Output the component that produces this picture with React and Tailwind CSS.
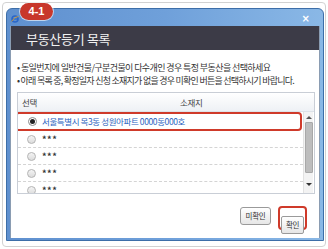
export default function App() {
  const rows = ['***', '***', '***', '***'];

  return (
    <div className="w-[328px] h-[249px] bg-white p-[2px] font-['Noto_Sans_CJK_KR','Noto_Sans',sans-serif]">
      <div className="relative h-[245px] rounded-[4px] border border-[#d2d2d2] pt-[5px] pl-[3px] pr-[1px]">
        {/* step badge */}
        <span className="absolute left-[17px] top-[0px] w-[33px] h-[17px] rounded-full bg-[#c8372b] text-white text-[11px] font-bold leading-[17px] text-center shadow-[0_0_0_1px_rgba(255,255,255,0.6)] font-['Liberation_Sans',sans-serif]">
          4-1
        </span>

        {/* window */}
        <div className="w-[318px] h-[233px] flex flex-col rounded-t-[6px] border border-[#3d6ea8] bg-gradient-to-r from-[#5f90cf] via-[#6fa0da] to-[#8ab8e6] px-[3px] pb-[2px]">
          <div className="h-[17px] flex items-center justify-between">
            <svg width="8" height="8" viewBox="0 0 8 8" className="ml-[1px] mt-[3px]">
              <circle cx="4" cy="4" r="3" fill="none" stroke="#2a66c8" strokeWidth="1.6" />
              <path d="M1.5 4h5" stroke="#2a66c8" strokeWidth="1.2" />
              <path d="M0.5 6.5 Q4 1 7.5 1.5" fill="none" stroke="#e8a020" strokeWidth="0.8" />
            </svg>
            <span className="mr-[10px] mt-[2px] text-white text-[10px] font-bold leading-none font-['DejaVu_Sans',sans-serif]">×</span>
          </div>

          <div className="flex-1 flex flex-col bg-white border-l border-r border-[#8a9cb2]">
            <div className="h-[24px] shrink-0 bg-[#3c3b47] text-[#f2f2f2] text-[13px] leading-none flex items-center pl-[15px] tracking-[-0.3px]">
              부동산등기 목록
            </div>

            <div className="flex-1 flex flex-col pt-[11px]">
              <div className="pl-[6px] text-[#333] text-[9px] tracking-[-0.6px] leading-[13px] whitespace-nowrap">
                <p>• 동일번지에 일반건물/구분건물이 다수개인 경우 특정 부동산을 선택하세요</p>
                <p className="tracking-[-0.75px]">• 아래 목록 중, 확정일자 신청 소재지가 없을 경우 미확인 버튼을 선택하시기 바랍니다.</p>
              </div>

              {/* table */}
              <div className="ml-[6px] mt-[5px] w-[298px] h-[102px] border border-[#c9ced6] flex flex-col">
                <div className="h-[19px] shrink-0 flex items-center bg-gradient-to-b from-white to-[#eef1f5] border-b border-[#dde2e8] text-[#444] text-[8.5px] tracking-[-0.3px]">
                  <span className="pl-[4px] w-[48px]">선택</span>
                  <span className="pl-[114px]">소재지</span>
                </div>
                <div className="flex-1 flex overflow-hidden">
                  <div className="flex-1 flex flex-col">
                    <div className="-ml-[3px] h-[19px] w-[287px] shrink-0 flex items-center rounded-[4px] border-2 border-[#cf3a2a]">
                      <span className="ml-[11px] w-[9px] h-[9px] rounded-full border border-[#8a8a8a] bg-white flex items-center justify-center">
                        <span className="w-[5px] h-[5px] rounded-full bg-[#222]" />
                      </span>
                      <span className="ml-[5px] text-[#2a5fc0] text-[8.5px] tracking-[-0.4px] whitespace-nowrap">
                        서울특별시 목3동 성원아파트 0000동000호
                      </span>
                    </div>
                    {rows.map((r, i) => (
                      <div key={i} className="h-[17px] shrink-0 flex items-center border-b border-dashed border-[#d4d4d4]">
                        <span className="ml-[9px] w-[9px] h-[9px] rounded-full border border-[#b4b4b4] bg-gradient-to-b from-[#f4f4f4] to-[#dcdcdc]" />
                        <span className="ml-[6px] text-[#333] text-[9px] font-bold leading-none tracking-[0.5px]">{r}</span>
                      </div>
                    ))}
                  </div>
                  <div className="w-[10px] mr-[1px] flex flex-col items-center bg-[#f3f3f3] border-l border-[#e2e2e2]">
                    <span className="mt-[4px] w-0 h-0 border-x-[3px] border-x-transparent border-b-[3px] border-b-[#555]" />
                    <div className="mt-[3px] w-[8px] h-[51px] bg-[#bdbdbd] border border-[#a8a8a8] rounded-[1px]" />
                    <span className="mt-[10px] w-0 h-0 border-x-[3px] border-x-transparent border-t-[3px] border-t-[#333]" />
                  </div>
                </div>
              </div>

              {/* buttons */}
              <div className="mt-[12px] flex justify-end items-start gap-[7px] pr-[12px]">
                <button className="mt-[1px] w-[31px] h-[18px] rounded-[3px] border border-[#9a9a9a] bg-gradient-to-b from-white to-[#e6e6e6] text-[#333] text-[7.5px] tracking-[-0.3px] leading-none">
                  미확인
                </button>
                <div className="w-[29px] h-[24px] rounded-[4px] border-2 border-[#cf3a2a] p-[1px]">
                  <button className="w-full h-full rounded-[2px] border border-[#9a9a9a] bg-gradient-to-b from-white to-[#e6e6e6] text-[#333] text-[7.5px] tracking-[-0.3px] leading-none">
                    확인
                  </button>
                </div>
              </div>
            </div>
          </div>
        </div>
      </div>
    </div>
  );
}
